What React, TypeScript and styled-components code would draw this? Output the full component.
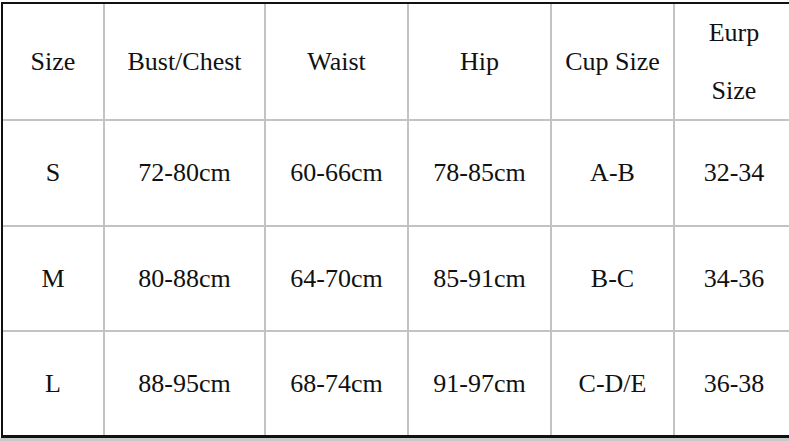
import styled, { createGlobalStyle } from 'styled-components';

const GlobalStyle = createGlobalStyle`
  html, body {
    margin: 0;
    padding: 0;
    background: #fff;
    overflow: hidden;
  }
`;

const Page = styled.div`
  width: 789px;
  height: 441px;
  overflow: hidden;
  background: #fff;
  padding-top: 2px;
  box-sizing: border-box;
`;

const Table = styled.div`
  display: grid;
  grid-template-columns: 102px 161px 143px 143px 123px 118px;
  grid-template-rows: 117px 106px 105px 103px;
  width: max-content;
  margin-left: 1px;
  border-top: 2px solid #111;
  border-left: 2px solid #111;
  border-right: 2px solid #111;
  border-bottom: 3px solid #111;
  font-family: "Liberation Serif", "Times New Roman", serif;
  font-size: 26px;
  color: #111;
`;

const Cell = styled.div<{ $lastCol?: boolean; $lastRow?: boolean; $tall?: boolean }>`
  display: flex;
  align-items: center;
  justify-content: center;
  text-align: center;
  box-sizing: border-box;
  border-right: ${p => (p.$lastCol ? 'none' : '2px solid #c3c3c3')};
  border-bottom: ${p => (p.$lastRow ? 'none' : '2px solid #c3c3c3')};
  line-height: ${p => (p.$tall ? '58px' : '1.2')};
  white-space: pre-line;
`;

const Shadow = styled.div`
  height: 4px;
  background: #c9c9c9;
`;

const header = ['Size', 'Bust/Chest', 'Waist', 'Hip', 'Cup Size', 'Eurp\nSize'];
const rows = [
  ['S', '72-80cm', '60-66cm', '78-85cm', 'A-B', '32-34'],
  ['M', '80-88cm', '64-70cm', '85-91cm', 'B-C', '34-36'],
  ['L', '88-95cm', '68-74cm', '91-97cm', 'C-D/E', '36-38'],
];

const App = () => {
  const all = [header, ...rows];
  return (
    <Page>
      <GlobalStyle />
      <Table>
        {all.map((row, r) =>
          row.map((text, c) => (
            <Cell
              key={`${r}-${c}`}
              $lastCol={c === row.length - 1}
              $lastRow={r === all.length - 1}
              $tall={r === 0 && c === row.length - 1}
            >
              {text}
            </Cell>
          ))
        )}
      </Table>
      <Shadow />
    </Page>
  );
};

export default App;
